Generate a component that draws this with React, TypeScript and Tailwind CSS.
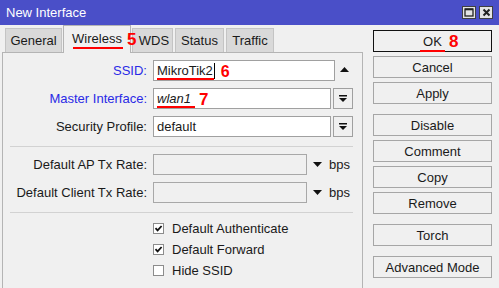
import React from "react";

const DropIcon = () => (
  <svg width="8" height="8" viewBox="0 0 8 8">
    <rect x="0" y="0" width="8" height="1.5" fill="#111" />
    <polygon points="0,3 8,3 4,7" fill="#111" />
  </svg>
);

const DownTri = () => (
  <svg width="9" height="5" viewBox="0 0 9 5">
    <polygon points="0,0 9,0 4.5,5" fill="#111" />
  </svg>
);

const UpTri = () => (
  <svg width="9" height="5" viewBox="0 0 9 5">
    <polygon points="0,5 9,5 4.5,0" fill="#111" />
  </svg>
);

const Check = () => (
  <svg width="9" height="9" viewBox="0 0 9 9">
    <path d="M1.5 4.2 L3.6 6.4 L7.6 2" stroke="#111" strokeWidth="1.8" fill="none" />
  </svg>
);

function Btn({ children, first }: { children: React.ReactNode; first?: boolean }) {
  return (
    <div
      className={
        "relative h-[22px] w-[119px] flex items-center justify-center bg-[#f0f0f0] border " +
        (first ? "border-[#111]" : "border-[#a6a6a6]")
      }
    >
      {children}
    </div>
  );
}

export default function App() {
  return (
    <div className="w-[499px] h-[288px] overflow-hidden bg-[#f0f0f0] text-[13px] leading-none text-[#1a1a1a] flex flex-col font-['Liberation_Sans',Arial,sans-serif]">
      {/* Title bar */}
      <div className="h-[25px] bg-[#4a4fc8] flex items-center pl-[6px] pr-[6px] text-white">
        <span className="flex-1 pb-[1px]">New Interface</span>
        <div className="flex gap-[3px] mb-[1px]">
          <div className="w-[14px] h-[13px] bg-[#e4e4e4] border border-[#404040] flex items-center justify-center">
            <svg width="10" height="9" viewBox="0 0 10 9">
              <rect x="1" y="1" width="8" height="7" fill="none" stroke="#222" strokeWidth="1.3" />
              <rect x="1" y="0.5" width="8" height="1.8" fill="#222" />
            </svg>
          </div>
          <div className="w-[14px] h-[13px] bg-[#e4e4e4] border border-[#404040] flex items-center justify-center">
            <svg width="9" height="9" viewBox="0 0 9 9">
              <path d="M1.5 1.5 L7.5 7.5 M7.5 1.5 L1.5 7.5" stroke="#222" strokeWidth="2" />
            </svg>
          </div>
        </div>
      </div>

      <div className="flex flex-1">
        {/* Left column */}
        <div className="w-[363px] flex flex-col">
          {/* Tabs */}
          <div className="h-[27px] flex items-end pl-[5px] gap-[1px] relative z-10">
            <div className="h-[24px] w-[57px] bg-[#d9d9d9] border border-b-0 border-[#c4c4c4] flex items-center justify-center">
              General
            </div>
            <div className="relative h-[28px] w-[68px] -mb-px bg-[#f0f0f0] border border-b-0 border-[#b4b4b4] flex items-center justify-center pb-[2px]">
              <span className="relative">
                Wireless
                <span className="absolute left-[1px] right-[-1px] top-[15px] h-[2px] bg-[#ff0000]" />
              </span>
              <span className="absolute left-[63px] top-[5px] text-[17px] text-[#ff0000] font-bold">5</span>
            </div>
            <div className="h-[24px] w-[41px] bg-[#d9d9d9] border border-b-0 border-[#c4c4c4] flex items-center justify-center pl-[3px]">
              WDS
            </div>
            <div className="h-[24px] w-[49px] bg-[#d9d9d9] border border-b-0 border-[#c4c4c4] flex items-center justify-center ml-[1px]">
              Status
            </div>
            <div className="h-[24px] w-[48px] bg-[#d9d9d9] border border-b-0 border-[#c4c4c4] flex items-center justify-center ml-[1px]">
              Traffic
            </div>
          </div>

          {/* Panel */}
          <div className="flex-1 ml-[2px] w-[361px] border border-b-0 border-[#b4b4b4] bg-[#f0f0f0] pt-[7px]">
            {/* SSID */}
            <div className="flex items-center h-[21px]">
              <div className="w-[144px] text-right text-[#2a2ae6]">SSID:</div>
              <div className="relative ml-[6px] w-[182px] h-[21px] border border-[#a0a0a0] bg-white flex items-center pl-[3px]">
                <span className="relative">
                  MikroTik2
                  <span className="absolute left-0 right-[-1px] top-[14px] h-[2px] bg-[#ff0000]" />
                </span>
                <span className="w-px h-[16px] bg-black ml-[1px]" />
                <span className="ml-[6px] text-[16px] font-bold text-[#ff0000] mt-[2px]">6</span>
              </div>
              <div className="ml-[5px] mb-[2px]">
                <UpTri />
              </div>
            </div>
            {/* Master Interface */}
            <div className="flex items-center h-[21px] mt-[7px]">
              <div className="w-[144px] text-right text-[#2a2ae6]">Master Interface:</div>
              <div className="ml-[6px] w-[178px] h-[21px] border border-[#a0a0a0] bg-white flex items-center pl-[3px]">
                <span className="relative italic">
                  wlan1
                  <span className="absolute left-0 right-[-4px] top-[14px] h-[2px] bg-[#ff0000]" />
                </span>
                <span className="ml-[8px] text-[17px] font-bold text-[#ff0000] mt-[1px]">7</span>
              </div>
              <div className="ml-[2px] w-[20px] h-[21px] border border-[#a0a0a0] bg-[#f0f0f0] flex items-center justify-center">
                <DropIcon />
              </div>
            </div>
            {/* Security Profile */}
            <div className="flex items-center h-[21px] mt-[7px]">
              <div className="w-[144px] text-right">Security Profile:</div>
              <div className="ml-[6px] w-[178px] h-[21px] border border-[#a0a0a0] bg-white flex items-center pl-[3px]">
                default
              </div>
              <div className="ml-[2px] w-[20px] h-[21px] border border-[#a0a0a0] bg-[#f0f0f0] flex items-center justify-center">
                <DropIcon />
              </div>
            </div>

            <div className="mt-[9px] ml-[7px] w-[343px] h-px bg-[#d2d2d2]" />

            {/* Rates */}
            <div className="flex items-center h-[21px] mt-[7px]">
              <div className="w-[144px] text-right">Default AP Tx Rate:</div>
              <div className="ml-[6px] w-[154px] h-[21px] border border-[#a8a8a8] bg-[#f0f0f0]" />
              <div className="ml-[6px] mb-[1px]">
                <DownTri />
              </div>
              <div className="ml-[7px]">bps</div>
            </div>
            <div className="flex items-center h-[21px] mt-[7px]">
              <div className="w-[144px] text-right">Default Client Tx Rate:</div>
              <div className="ml-[6px] w-[154px] h-[21px] border border-[#a8a8a8] bg-[#f0f0f0]" />
              <div className="ml-[6px] mb-[1px]">
                <DownTri />
              </div>
              <div className="ml-[7px]">bps</div>
            </div>

            <div className="mt-[9px] ml-[7px] w-[343px] h-px bg-[#d2d2d2]" />

            {/* Checkboxes */}
            <div className="mt-[5px] flex flex-col">
              {[
                { label: "Default Authenticate", checked: true },
                { label: "Default Forward", checked: true },
                { label: "Hide SSID", checked: false },
              ].map((c) => (
                <div key={c.label} className="flex items-center h-[21px]">
                  <div className="ml-[150px] w-[11px] h-[11px] border border-[#8c8c8c] bg-white flex items-center justify-center">
                    {c.checked && <Check />}
                  </div>
                  <div className="ml-[8px]">{c.label}</div>
                </div>
              ))}
            </div>
          </div>
        </div>

        {/* Right buttons */}
        <div className="pl-[10px] pt-[5px] flex flex-col">
          <Btn first>
            <span className="relative">
              OK
              <span className="absolute left-[-3px] right-[-3px] top-[15px] h-[2px] bg-[#ff0000]" />
            </span>
            <span className="absolute left-[75px] top-[2px] text-[17px] font-bold text-[#ff0000]">8</span>
          </Btn>
          <div className="mt-[4px]"><Btn>Cancel</Btn></div>
          <div className="mt-[4px]"><Btn>Apply</Btn></div>
          <div className="mt-[10px]"><Btn>Disable</Btn></div>
          <div className="mt-[4px]"><Btn>Comment</Btn></div>
          <div className="mt-[4px]"><Btn>Copy</Btn></div>
          <div className="mt-[4px]"><Btn>Remove</Btn></div>
          <div className="mt-[10px]"><Btn>Torch</Btn></div>
          <div className="mt-[10px]"><Btn>Advanced Mode</Btn></div>
        </div>
      </div>
    </div>
  );
}
